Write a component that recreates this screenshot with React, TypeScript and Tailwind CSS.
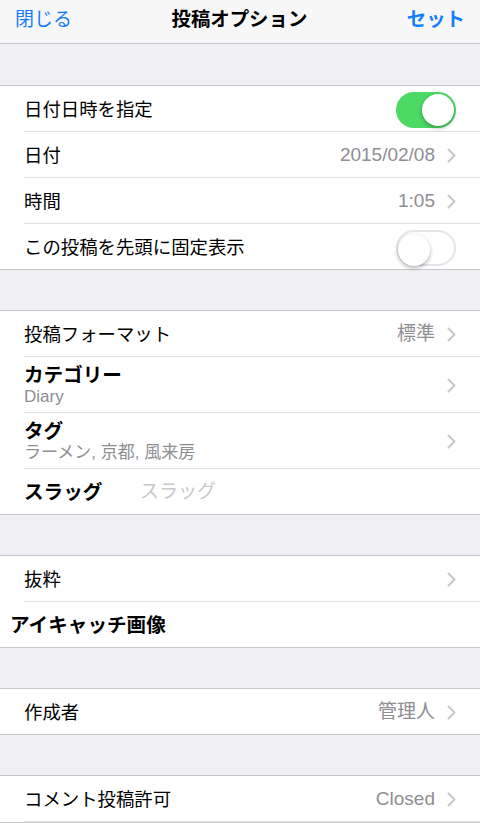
import React from 'react';

const font = { fontFamily: '"Liberation Sans", "Noto Sans CJK JP", sans-serif' };

const Chevron = () => (
  <svg width="9" height="15" viewBox="0 0 9 15" className="ml-[12px] shrink-0">
    <path d="M1.5 1.5 L7.5 7.5 L1.5 13.5" fill="none" stroke="#c7c7cc" strokeWidth="2" strokeLinecap="round" strokeLinejoin="round" />
  </svg>
);

const Toggle = ({ on }: { on: boolean }) => (
  <div
    className={`relative w-[60px] h-[36px] rounded-full shrink-0 ${
      on ? 'bg-[#4cd964]' : 'bg-white border-2 border-[#e5e5ea]'
    }`}
  >
    <div
      className={`absolute top-[2px] w-[32px] h-[32px] rounded-full bg-white shadow-[0_2px_4px_rgba(0,0,0,0.3)] ${
        on ? 'right-[2px]' : 'left-0 top-0'
      }`}
    />
  </div>
);

// rows are 46px tall including their inset separator; the last row of a section is 45px with no separator
const Row = ({
  label,
  value,
  chevron,
  last,
  children,
}: {
  label: string;
  value?: string;
  chevron?: boolean;
  last?: boolean;
  children?: React.ReactNode;
}) => (
  <div className="pl-[24px] bg-white">
    <div
      className={`flex items-center pr-[24px] pt-[2px] ${
        last ? 'h-[45px]' : 'h-[46px] border-b border-[#e0e0e4]'
      }`}
    >
      <span className="flex-1 text-[18.4px] text-black">{label}</span>
      {value && <span className="text-[19px] text-[#8e8e93]">{value}</span>}
      {chevron && <Chevron />}
      {children}
    </div>
  </div>
);

const SubRow = ({ title, sub }: { title: string; sub: string }) => (
  <div className="pl-[24px] bg-white">
    <div className="h-[56px] flex items-center pr-[24px] pt-[2px] border-b border-[#e0e0e4]">
      <div className="flex-1 flex flex-col leading-none">
        <span className="text-[19.6px] font-bold text-black leading-[22px]">{title}</span>
        <span className="text-[17px] text-[#8e8e93] leading-[21px]">{sub}</span>
      </div>
      <Chevron />
    </div>
  </div>
);

const Section = ({ children }: { children: React.ReactNode }) => (
  <div className="border-y border-[#c8c7cc] bg-white">{children}</div>
);

const Gap = () => <div className="h-[40px]" />;

export default function App() {
  return (
    <div className="w-[480px] h-[823px] overflow-hidden bg-[#efeff4]" style={font}>
      <div className="h-[44px] bg-[#f7f7f7] border-b border-[#c8c7cc] flex items-center justify-between px-[15px] pb-[3px]">
        <span className="text-[19px] text-[#157efb]">閉じる</span>
        <span className="text-[19.4px] font-bold text-black">投稿オプション</span>
        <span className="text-[19.4px] font-bold text-[#157efb]">セット</span>
      </div>
      <div className="h-[41px]" />
      <Section>
        <Row label="日付日時を指定">
          <Toggle on />
        </Row>
        <Row label="日付" value="2015/02/08" chevron />
        <Row label="時間" value="1:05" chevron />
        <Row label="この投稿を先頭に固定表示" last>
          <Toggle on={false} />
        </Row>
      </Section>
      <Gap />
      <Section>
        <Row label="投稿フォーマット" value="標準" chevron />
        <SubRow title="カテゴリー" sub="Diary" />
        <SubRow title="タグ" sub="ラーメン, 京都, 風来房" />
        <div className="pl-[24px] h-[45px] flex items-center pt-[2px]">
          <span className="text-[19.6px] font-bold text-black w-[116px]">スラッグ</span>
          <span className="text-[19px] text-[#c7c7cd]">スラッグ</span>
        </div>
      </Section>
      <Gap />
      <Section>
        <Row label="抜粋" chevron />
        <div className="pl-[10px] h-[45px] flex items-center pt-[2px]">
          <span className="text-[19.6px] font-bold text-black">アイキャッチ画像</span>
        </div>
      </Section>
      <Gap />
      <Section>
        <Row label="作成者" value="管理人" chevron last />
      </Section>
      <Gap />
      <Section>
        <Row label="コメント投稿許可" value="Closed" chevron />
      </Section>
    </div>
  );
}
